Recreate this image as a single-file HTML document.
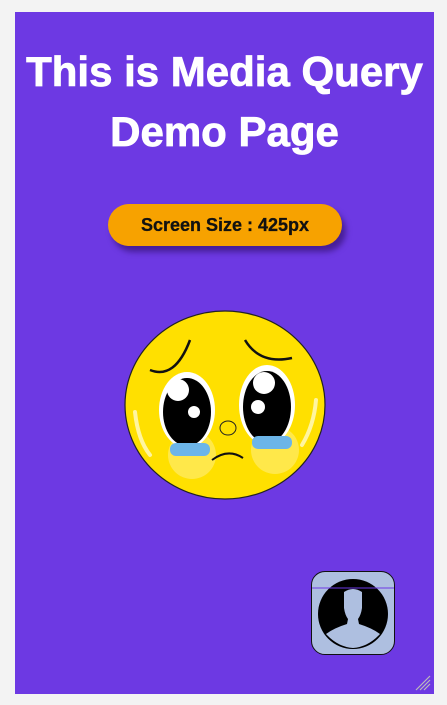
<!DOCTYPE html>
<html><head><style>
html,body{margin:0;padding:0;background:#f3f3f3;width:447px;height:705px;overflow:hidden}
.p{position:absolute;left:15px;top:12px;width:419px;height:682px;background:#6d39e3}
h1{position:absolute;left:0;width:419px;top:30px;margin:0;text-align:center;color:#fff;font:bold 42px/60px "Liberation Sans",sans-serif;letter-spacing:0px;-webkit-text-stroke:0.8px #fff}
.b{position:absolute;left:93px;top:192px;width:234px;height:42px;border-radius:21px;background:#f7a200;box-shadow:4px 6px 6px rgba(40,10,90,.55);text-align:center;font:bold 18px/42px "Liberation Sans",sans-serif;color:#111;-webkit-text-stroke:0.3px #111}
.a{position:absolute;left:296px;top:559px;width:82px;height:82px;border:1px solid #111;border-radius:14px;background:#aebfe0;overflow:hidden}
</style></head><body>
<div class="p">
<h1>This is Media Query<br>Demo Page</h1>
<div class="b">Screen Size : 425px</div>
<svg style="position:absolute;left:0;top:0" width="419" height="682">
<g transform="translate(-15,-12)">
<ellipse cx="225" cy="405" rx="100" ry="94" fill="#ffe000" stroke="#222" stroke-width="1.2"/>
<circle cx="192" cy="455" r="24" fill="#ffe84a"/><circle cx="275" cy="450" r="24" fill="#ffe84a"/>
<path d="M150 370 Q175 380 190 340" fill="none" stroke="#111" stroke-width="2.5"/>
<path d="M245 340 Q260 365 292 358" fill="none" stroke="#111" stroke-width="2.5"/>
<ellipse cx="187" cy="410" rx="28" ry="38" fill="#fff"/><ellipse cx="187" cy="412" rx="24" ry="34" fill="#000"/>
<ellipse cx="267" cy="405" rx="28" ry="40" fill="#fff"/><ellipse cx="267" cy="407" rx="24" ry="36" fill="#000"/>
<circle cx="178" cy="390" r="11" fill="#fff"/><circle cx="194" cy="412" r="6" fill="#fff"/>
<circle cx="264" cy="383" r="11" fill="#fff"/><circle cx="258" cy="407" r="7" fill="#fff"/>
<rect x="170" y="443" width="40" height="13" rx="6" fill="#6cb5e8"/>
<rect x="252" y="436" width="40" height="13" rx="6" fill="#6cb5e8"/>
<ellipse cx="228" cy="428" rx="8" ry="7" fill="#ffe000" stroke="#222"/>
<path d="M212 460 Q228 448 243 458" fill="none" stroke="#111" stroke-width="2"/>
<path d="M135 412 Q138 440 150 455" fill="none" stroke="#fff5a0" stroke-width="4" stroke-linecap="round"/>
<path d="M316 400 Q314 425 302 445" fill="none" stroke="#fff5a0" stroke-width="4" stroke-linecap="round"/>
<path d="M420 690 L430 680 M424 690 L430 684 M416 690 L430 676" stroke="#bbb" stroke-width="1.2"/>
</g></svg>
<div class="a">
<svg width="82" height="82" viewBox="0 0 82 82">
<circle cx="41" cy="42" r="35" fill="#000"/>
<path d="M32 20 Q41 14 50 20 L50 36 Q49 43 46 47 L47 52 Q60 56 68 62 Q56 75 41 76 Q26 75 14 62 Q22 56 35 52 L36 47 Q33 43 32 36 Z" fill="#aebfe0"/>
<line x1="0" y1="16" x2="82" y2="16" stroke="#6d39e3" stroke-width="1"/>
</svg></div>
</div>
</body></html>
